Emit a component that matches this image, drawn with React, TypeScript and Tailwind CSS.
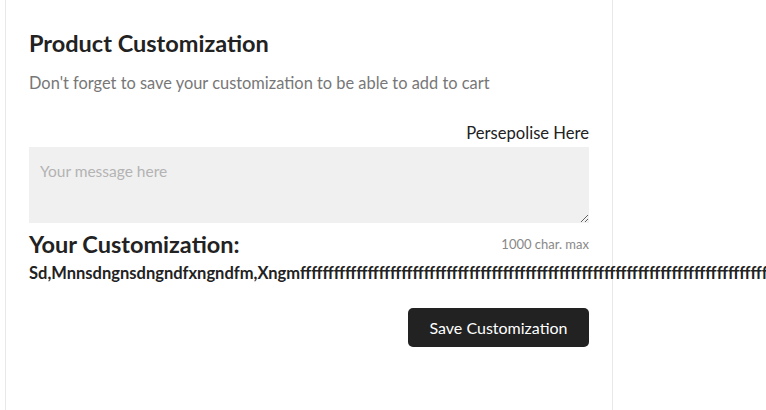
import React, { useState } from 'react';

const longText =
  'Sd,Mnnsdngnsdngndfxngndfm,Xngm' + 'f'.repeat(140);

export default function App() {
  const [message, setMessage] = useState('');

  return (
    <div className="min-h-[410px] bg-white font-['Lato','Liberation_Sans',sans-serif] overflow-hidden">
      <div className="ml-[5px] w-[608px] min-h-[410px] border-x border-[#e8e8e8] px-[23px] pt-[28px]">
        <h2 className="text-[23.5px] font-bold text-[#222] leading-[30px]">Product Customization</h2>
        <p className="mt-[15px] text-[16.4px] text-[#777] leading-[20px]">
          Don't forget to save your customization to be able to add to cart
        </p>

        <div className="mt-[30px] flex flex-col">
          <label htmlFor="msg" className="self-end text-[16.6px] text-[#222] leading-[20px]">
            Persepolise Here
          </label>
          <textarea
            id="msg"
            className="mt-[4px] h-[76px] w-full bg-[#f0f0f0] px-[11px] py-[14px] text-[15.5px] text-[#333] placeholder:text-[#b3b3b3] outline-none resize-y leading-[20px]"
            placeholder="Your message here"
            value={message}
            onChange={(e) => setMessage(e.target.value)}
          />
          <div className="mt-[8px] flex items-start justify-between">
            <h3 className="text-[23.5px] font-bold text-[#222] leading-[26px]">Your Customization:</h3>
            <span className="mt-[5px] text-[13px] text-[#888] leading-[16px]">1000 char. max</span>
          </div>
          <div className="mt-[6px] whitespace-nowrap text-[16.5px] font-bold text-[#222] leading-[20px]">
            {longText}
          </div>
        </div>

        <div className="mt-[25px] flex justify-end">
          <button className="h-[39px] w-[181px] rounded-[5px] bg-[#222] text-[16px] text-white">
            Save Customization
          </button>
        </div>
      </div>
    </div>
  );
}
